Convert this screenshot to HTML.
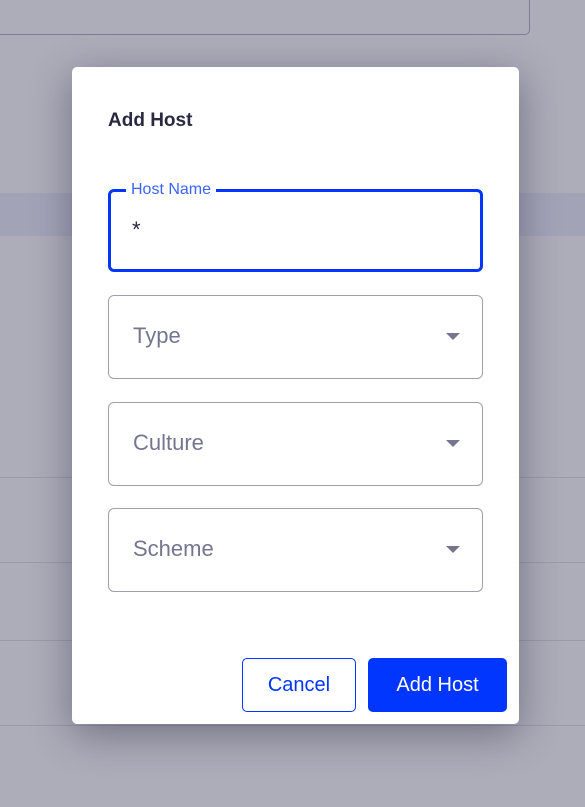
<!DOCTYPE html>
<html><head><style>
*{box-sizing:border-box;margin:0;padding:0}
body{width:585px;height:807px;overflow:hidden;background:#adacb9;font-family:"Liberation Sans",sans-serif;position:relative}
.abs{position:absolute}
.line{position:absolute;left:0;width:585px;height:1px;background:#9b9aab}
.dlg{position:absolute;left:72px;top:67px;width:447px;height:657px;background:#fff;border-radius:5px;box-shadow:0 10px 40px rgba(40,40,60,.45)}
.f{position:absolute;left:36px;width:375px;height:84px;border:1px solid #a09fb0;border-radius:6px}
.f span{position:absolute;left:24px;top:27px;font-size:22px;color:#767590}
.f i{position:absolute;right:22px;top:37px;width:0;height:0;border-left:7px solid transparent;border-right:7px solid transparent;border-top:7px solid #767590}
</style></head><body>
<div class="abs" style="left:-10px;top:-10px;width:540px;height:45px;border:1px solid #7d7c93;border-radius:5px"></div>
<div class="abs" style="left:0;top:193px;width:585px;height:43px;background:#a3a3b8"></div>
<div class="line" style="top:477px"></div>
<div class="line" style="top:562px"></div>
<div class="line" style="top:640px"></div>
<div class="line" style="top:725px"></div>
<div class="dlg">
<div class="abs" style="left:36px;top:43px;font-size:19px;font-weight:bold;color:#2a2940">Add Host</div>
<div class="f" style="top:122px;height:83px;border:3px solid #0036ff">
 <div class="abs" style="left:15px;top:-11px;background:#fff;padding:0 5px;font-size:16px;color:#3d63ff">Host Name</div>
 <div class="abs" style="left:21px;top:25px;font-size:22px;color:#2a2940">*</div>
</div>
<div class="f" style="top:228px"><span>Type</span><i></i></div>
<div class="f" style="top:335px"><span>Culture</span><i></i></div>
<div class="f" style="top:441px"><span>Scheme</span><i></i></div>
<div class="abs" style="left:170px;top:591px;width:114px;height:54px;border:1px solid #0036ff;border-radius:5px;color:#0036ff;font-size:20px;text-align:center;line-height:52px">Cancel</div>
<div class="abs" style="left:296px;top:591px;width:139px;height:54px;background:#0036ff;border-radius:5px;color:#fff;font-size:20px;text-align:center;line-height:54px">Add Host</div>
</div>
</body></html>
